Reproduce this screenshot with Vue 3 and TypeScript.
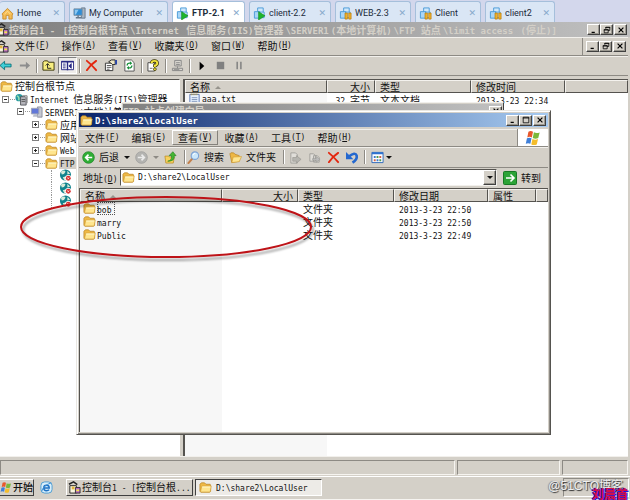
<script setup lang="ts">
import { h, ref, type FunctionalComponent } from 'vue'

interface Tab { label: string; icon: string; active?: boolean; width: number }
interface Menu { label: string; key: string; hot?: boolean }
interface Node { label: string; icon: string; depth: number; sign?: string; selected?: boolean }

// Splits a string into Chinese and Latin runs so each gets its own font size.
const Mixed: FunctionalComponent<{ text: string }> = (props) =>
  props.text
    .split(/([\x20-\x7e]+)/)
    .filter((part) => part !== '')
    .map((part) => (/^[\x20-\x7e]/.test(part) ? h('span', { class: 'latin' }, part) : part))
Mixed.props = ['text']

const tabs: Tab[] = [
  { label: 'Home', icon: 'home', width: 65 },
  { label: 'My Computer', icon: 'pc', width: 99 },
  { label: 'FTP-2.1', icon: 'vm-run', active: true, width: 73 },
  { label: 'client-2.2', icon: 'vm-run', width: 82 },
  { label: 'WEB-2.3', icon: 'vm-pause', width: 76 },
  { label: 'Client', icon: 'vm-pause', width: 66 },
  { label: 'client2', icon: 'vm-pause', width: 70 },
]

const titleParts = ['控制台1 - ', '[控制台根节点', '\\Internet ', '信息服务(IIS)管理器', '\\SERVER1', '(本地计算机)', '\\FTP 站点', '\\limit access ', '(停止)]']

const mainMenus: Menu[] = [
  { label: '文件', key: 'F' },
  { label: '操作', key: 'A' },
  { label: '查看', key: 'V' },
  { label: '收藏夹', key: 'O' },
  { label: '窗口', key: 'W' },
  { label: '帮助', key: 'H' },
]

const folderMenus: Menu[] = [
  { label: '文件', key: 'F' },
  { label: '编辑', key: 'E' },
  { label: '查看', key: 'V', hot: true },
  { label: '收藏', key: 'A' },
  { label: '工具', key: 'T' },
  { label: '帮助', key: 'H' },
]

const tools = ['back', 'next', '|', 'up', 'panes', '|', 'cross', 'props', 'refresh', '|', 'help', '|', 'net', '|', 'play', 'stop', 'pause']

const tree: Node[] = [
  { label: '控制台根节点', icon: 'folder', depth: 0 },
  { label: 'Internet 信息服务(IIS)管理器', icon: 'iis', depth: 1, sign: '-' },
  { label: 'SERVER1(本地计算机)', icon: 'server', depth: 2, sign: '-' },
  { label: '应用程序池', icon: 'folder', depth: 3, sign: '+' },
  { label: '网站', icon: 'folder', depth: 3, sign: '+' },
  { label: 'Web 服务扩展', icon: 'folder', depth: 3, sign: '+' },
  { label: 'FTP 站点', icon: 'folder', depth: 3, sign: '-', selected: true },
  { label: '', icon: 'globe', depth: 4 },
  { label: '', icon: 'globe', depth: 4 },
  { label: '', icon: 'globe', depth: 4 },
]

const folders = [
  { name: 'bob', date: '2013-3-23 22:50' },
  { name: 'marry', date: '2013-3-23 22:50' },
  { name: 'Public', date: '2013-3-23 22:49' },
]

const address = ref('D:\\share2\\LocalUser')
</script>

<template>
  <svg class="defs" aria-hidden="true">
    <symbol id="home" viewBox="0 0 14 14"><path d="M1 7.5 7 1.5l6 6-1 1V13H8.500V9h-3v4H2V8.500z" fill="#f5bd55" stroke="#c98b2c" /><path d="M4 7.500 7 4.500l3 3" fill="none" stroke="#ffe3a0" /></symbol>
    <symbol id="pc" viewBox="0 0 14 14"><path d="M9 1h4v11H9z" fill="#a9b6c2" stroke="#66788a" /><path d="M1 2h9v7H1z" fill="#2f8ed6" stroke="#8394a5" /><path d="M2 3h4L3 8H2z" fill="#8cc8f1" /><path d="M3 11.500h6M5.500 9v2" stroke="#66788a" stroke-width="1.500" /></symbol>
    <symbol id="vm" viewBox="0 0 14 14"><path d="M5 1h6v6H5z" fill="#cfe8fb" stroke="#4a9ad8" /><path d="M1.500 5h6v7h-6z" fill="#a9d5f7" stroke="#4a9ad8" /><path d="M7 5.500h5v6H7z" fill="#d9effd" stroke="#4a9ad8" /></symbol>
    <symbol id="vm-run" viewBox="0 0 14 14"><use href="#vm" /><path d="m6 5 7 4.500L6 14z" fill="#1fb52c" stroke="#128a1c" stroke-width=".6" /></symbol>
    <symbol id="vm-pause" viewBox="0 0 14 14"><use href="#vm" /><path d="M6.500 6.500H9V13H6.500zM10.500 6.500H13V13h-2.500z" fill="#f4b62a" stroke="#b77a0b" stroke-width=".8" /></symbol>
    <symbol id="mmc" viewBox="0 0 14 14"><path d="M2 5h7v8H2z" fill="#f8f4df" stroke="#222" /><path d="M1 3.500 6 1l4 3" fill="none" stroke="#222" stroke-width="1.600" /><path d="M8 7h5v6H8z" fill="#b86ac7" stroke="#333" /><path d="M4 6h3v3H4z" fill="#e3b43a" /><path d="M9 9h3v2H9z" fill="#f5e34b" /></symbol>
    <symbol id="folder" viewBox="0 0 14 14"><path d="M1 3.500 2.500 2H6l1.500 1.500H12l.5 1V11l-1 1H2l-1-1z" fill="#efb946" stroke="#b98424" stroke-width=".8" /><path d="M3 5.500h10.200L12 11.800H1.600z" fill="#ffe58e" stroke="#cf9a31" stroke-width=".6" /><path d="M3.500 6.500H12" stroke="#fff8cf" /></symbol>
    <symbol id="iis" viewBox="0 0 14 14"><circle cx="4.500" cy="5" r="4" fill="#2a9aa0" /><path d="M2 3q3 1 2 5" stroke="#9be0b0" fill="none" stroke-width="1.500" /><path d="M6 4h5l1 1v8H6z" fill="#b5b5bb" stroke="#55565e" /><path d="M8 3h5v8" fill="none" stroke="#777" /><path d="M7 7h4M7 9h4" stroke="#555" /></symbol>
    <symbol id="server" viewBox="0 0 14 14"><path d="M8 1h4l1 1v10H8z" fill="#c5c8d2" stroke="#777b8c" stroke-width=".8" /><path d="M1.500 2.500h8v6h-8z" fill="#6177d8" stroke="#9da2b4" /><path d="M3 11.500 4 9h3.500l1 2.500z" fill="#b9bdcb" /></symbol>
    <symbol id="globe" viewBox="0 0 14 14"><circle cx="7" cy="6.500" r="6" fill="#11838d" /><path d="M2 3q4-3 5 0-1 3-4 3M9 2l3 3-3 1zM4 9l3-1 2 3-3 1.500" fill="#d8ead9" /><circle cx="10" cy="10" r="3.500" fill="#fff" /><circle cx="10" cy="10" r="2.600" fill="#d72f2f" /><path d="m9 9 2 2m0-2-2 2" stroke="#fff" stroke-width=".7" /></symbol>
    <symbol id="back" viewBox="0 0 14 14"><path d="M1 7 6 2.500v3h7v3H6v3z" fill="#3fd0d8" stroke="#076b73" stroke-width=".9" /></symbol>
    <symbol id="next" viewBox="0 0 14 14"><path d="M13 7 8.500 3v3H2v2h6.500v3z" fill="#8d8d8d" /></symbol>
    <symbol id="up" viewBox="0 0 14 14"><path d="M1 3.500 2.500 2H6l1 1.500h6V12H1z" fill="#f8ef80" stroke="#35310b" /><path d="M6 5v5h4M4 7l2-2 2 2" fill="none" stroke="#222" /></symbol>
    <symbol id="panes" viewBox="0 0 14 14"><path d="M.5 2.500h13v9H.5z" fill="#fff" stroke="#2a2a84" /><path d="M.5 3h13M7 3v9" stroke="#2a2a84" stroke-width="1.500" /><path d="M2 5.500h3M2 7.500h3M2 9.500h3M11 5 8.500 7.500 11 10z" stroke="#2a2a84" fill="#2a2a84" /></symbol>
    <symbol id="cross" viewBox="0 0 14 14"><path d="M2 2q5 4 10 10M12 2Q6 6 2 12" fill="none" stroke="#e3260e" stroke-width="2" stroke-linecap="round" /></symbol>
    <symbol id="props" viewBox="0 0 14 14"><path d="M1.500 4.500h8v8h-8z" fill="#fff" stroke="#333" /><path d="M3 7h5M3 9h5M3 11h3" stroke="#555" /><path d="m5 3 3-2h4v5H9L7 4z" fill="#eee7c5" stroke="#222" /><path d="M12 1h2v5h-2z" fill="#2845a8" /></symbol>
    <symbol id="refresh" viewBox="0 0 14 14"><path d="M2 1h7l3 3v9H2z" fill="#fff" stroke="#555" /><path d="M4.500 7q0-3 3.500-2.500M9.500 7q0 3-3.500 2.500" stroke="#18903a" stroke-width="1.500" fill="none" /><path d="m7.500 2.500 2.500 2-2.500 2zM6.500 7.500 4 9.500l2.500 2z" fill="#18903a" /></symbol>
    <symbol id="help" viewBox="0 0 14 14"><path d="M1 4h7v9H1z" fill="#fff" stroke="#444" /><path d="M3 10h3" stroke="#666" /><path d="M5 4.500Q5 2 8 2t3 2.500Q11 6.500 8.500 7v1.500" fill="none" stroke="#3b3503" stroke-width="3.600" /><path d="M5 4.500Q5 2 8 2t3 2.500Q11 6.500 8.500 7v1.500" fill="none" stroke="#f4e63e" stroke-width="2" /><circle cx="8.500" cy="11" r="1.500" fill="#f4e63e" stroke="#3b3503" stroke-width=".8" /></symbol>
    <symbol id="net" viewBox="0 0 14 14"><path d="M4 1.500h7v6H4zM1.500 10h11v2.500h-11z" fill="#dad7d1" stroke="#858585" /><path d="M5.500 4h4M5.500 6h4M7 8v2M3 11.500h6" stroke="#858585" /></symbol>
    <symbol id="play" viewBox="0 0 14 14"><path d="m5 3 5 4.500L5 12z" /></symbol>
    <symbol id="stop" viewBox="0 0 14 14"><path d="M3 3h8v8H3z" fill="#808080" /></symbol>
    <symbol id="pause" viewBox="0 0 14 14"><path d="M4.500 3v8M8.500 3v8" stroke="#808080" stroke-width="1.600" /></symbol>
    <symbol id="txt" viewBox="0 0 14 14"><path d="M2 1.500h10v12H2z" fill="#e6f1ff" stroke="#5876b5" /><path d="M4 5h6M4 7h6M4 9h6" stroke="#8296ba" /><path d="M3 1.500h8" stroke="#b89c45" stroke-width="2" stroke-dasharray="1 1" /></symbol>
    <symbol id="go-back" viewBox="0 0 14 14"><circle cx="7" cy="7" r="6.300" fill="#2fae35" stroke="#1b7f24" stroke-width=".7" /><path d="M11 7H4m3-3L4 7l3 3" fill="none" stroke="#fff" stroke-width="1.800" /></symbol>
    <symbol id="go-next" viewBox="0 0 14 14"><circle cx="7" cy="7" r="6.300" fill="#b4b4b1" stroke="#979797" stroke-width=".7" /><path d="M3 7h7M7 4l3 3-3 3" fill="none" stroke="#ebebeb" stroke-width="1.800" /></symbol>
    <symbol id="folder-up" viewBox="0 0 14 14"><path d="M1 5.500h4l1 1h5L10 13H2z" fill="#f6d15b" stroke="#ba8b28" stroke-width=".8" /><path d="M4 11q5-1 4-6H5.500L9.500.8 13 5h-2q1 6-7 6z" fill="#45b733" stroke="#23801d" stroke-width=".7" /></symbol>
    <symbol id="search" viewBox="0 0 14 14"><path d="m6 8-4.500 5" stroke="#c37f4a" stroke-width="2.200" stroke-linecap="round" /><circle cx="8.500" cy="5" r="4" fill="#cbe7fb" stroke="#7ca2d4" stroke-width="1.200" /><path d="M6.500 4.500q.5-2 2.500-2" fill="none" stroke="#fff" /></symbol>
    <symbol id="folder-open" viewBox="0 0 14 14"><path d="m1 3 1-1h3l1.500 1.500L11 5v6L3 12.500z" fill="#eeb743" stroke="#b98424" stroke-width=".8" /><path d="m4.500 6.500 9-.5-2.500 5.500-8 1z" fill="#ffe58e" stroke="#cf9a31" stroke-width=".7" /></symbol>
    <symbol id="move" viewBox="0 0 14 14"><path d="M2 2h5l2 2v9H2z" fill="#e0ded9" stroke="#a09f9a" /><path d="M4 7h4V5l5 4-5 4v-2H4z" fill="#b5b4af" stroke="#979690" stroke-width=".7" /></symbol>
    <symbol id="copy" viewBox="0 0 14 14"><path d="M2 3h4l2 2v6H2zM6 5h4l2 2v5H6z" fill="#e0ded9" stroke="#a09f9a" /><path d="M5 8h4V6l4 3-4 3v-2H5z" fill="#bbb" stroke="#979690" stroke-width=".6" /></symbol>
    <symbol id="undo" viewBox="0 0 14 14"><path d="M3 6q7-5.500 8.500-1 .8 4-4.500 7.500" fill="none" stroke="#2468cf" stroke-width="2.800" /><path d="M0 1v8h8z" fill="#2468cf" /></symbol>
    <symbol id="views" viewBox="0 0 14 14"><path d="M1 1.500h12v11H1z" fill="#fff" stroke="#2965b9" /><path d="M1 2.500h12" stroke="#2e72d1" stroke-width="2" /><path d="M3 5.500h2v2H3zM6 9h2v2H6z" fill="#3f77c9" /><path d="M6 5.500h2v2H6zM9 9h2v2H9z" fill="#4b9a51" /><path d="M9 5.500h2v2H9zM3 9h2v2H3z" fill="#cf6147" /></symbol>
    <symbol id="go" viewBox="0 0 14 14"><rect x=".5" y=".5" width="13" height="13" rx="1" fill="#2ca337" stroke="#177824" /><path d="M3 7h8M7.500 3.500 11 7l-3.500 3.500" fill="none" stroke="#fff" stroke-width="1.600" /></symbol>
    <symbol id="flag" viewBox="0 0 14 14"><path d="M3 1.500q2-1.200 4 0L6 6.500q-2-1.200-4 0z" fill="#e8582b" /><path d="M7.800 2q2 1.300 5 .2L11.600 7q-2.500 1.200-4.800 0z" fill="#7bb83a" /><path d="M1.700 7.300q2-1.200 4 0l-1 4.800q-2-1.200-4 0z" fill="#3f7fd8" /><path d="M6.500 7.800q2.500 1.200 4.900.1l-1.100 4.700q-2.400 1.200-4.800 0z" fill="#f4bd2c" /></symbol>
    <symbol id="ie" viewBox="0 0 14 14"><rect x="1" y="1" width="12" height="12" rx="4" fill="#d9effb" stroke="#4a9ad2" /><path d="M4 7.500h6Q10 4.500 7 4.500T4 7.500t3 3q2 0 2.800-1.200" fill="none" stroke="#1f72c4" stroke-width="1.500" /><path d="M2 11Q3 5 12 2" fill="none" stroke="#3d90d6" /></symbol>
    <symbol id="cap-min" viewBox="0 0 10 10"><path d="M2 8h4" stroke="#000" stroke-width="1.600" /></symbol>
    <symbol id="cap-max" viewBox="0 0 10 10"><path d="M1.500 1.500h7v7h-7zM1 2.500h8" fill="none" stroke="#000" /></symbol>
    <symbol id="cap-restore" viewBox="0 0 10 10"><path d="M3.500 3.500v-2h5v4h-2M1.500 4.500h5v4h-5zM3 2h6M1 5h6" fill="none" stroke="#000" /></symbol>
    <symbol id="cap-close" viewBox="0 0 10 10"><path d="m2 2 6 6m0-6L2 8" stroke="#000" stroke-width="1.500" /></symbol>
  </svg>

  <div class="screen">
    <nav class="tabs">
      <div v-for="tab in tabs" :key="tab.label" class="tab" :class="{ active: tab.active }" :style="{ width: tab.width + 'px' }">
        <svg class="icon"><use :href="'#' + tab.icon" /></svg>
        <a href="#">{{ tab.label }}</a>
        <button class="tab-close" aria-label="Close">✕</button>
      </div>
    </nav>

    <main class="console">
      <header class="title inactive">
        <svg class="icon clip"><use href="#mmc" /></svg>
        <h1 class="path"><span v-for="part in titleParts" :key="part"><Mixed :text="part" /></span></h1>
        <div class="caps">
          <button class="cap" aria-label="Minimize"><svg><use href="#cap-min" /></svg></button>
          <button class="cap" aria-label="Restore"><svg><use href="#cap-restore" /></svg></button>
          <button class="cap last" aria-label="Close"><svg><use href="#cap-close" /></svg></button>
        </div>
      </header>

      <div class="menubar">
        <svg class="icon clip"><use href="#mmc" /></svg>
        <div class="menus">
          <button v-for="m in mainMenus" :key="m.key" class="menu">{{ m.label }}<span class="latin">(<u>{{ m.key }}</u>)</span></button>
        </div>
        <div class="caps child">
          <button class="cap" aria-label="Minimize"><svg><use href="#cap-min" /></svg></button>
          <button class="cap" aria-label="Restore"><svg><use href="#cap-restore" /></svg></button>
          <button class="cap last" aria-label="Close"><svg><use href="#cap-close" /></svg></button>
        </div>
      </div>

      <div class="toolbar">
        <template v-for="(t, i) in tools" :key="i">
          <span v-if="t === '|'" class="divider"></span>
          <button v-else class="tool" :class="{ pressed: t === 'panes' }" :aria-label="t"><svg class="icon"><use :href="'#' + t" /></svg></button>
        </template>
      </div>

      <div class="panes">
        <section class="tree-pane">
          <ul class="tree">
            <li v-for="(n, i) in tree" :key="i" :class="'depth-' + n.depth">
              <span v-if="n.depth > 0" class="branch"><i v-if="n.sign" class="sign" :class="{ plus: n.sign === '+' }"></i></span>
              <svg class="icon"><use :href="'#' + n.icon" /></svg>
              <span class="node" :class="{ selected: n.selected }"><Mixed :text="n.label" /></span>
            </li>
          </ul>
        </section>
        <section class="list-pane">
          <table class="list main-list">
            <colgroup><col class="c-name"><col class="c-size-s"><col class="c-type"><col class="c-date"><col></colgroup>
            <thead><tr><th>名称 <i class="sort"></i></th><th class="num">大小</th><th>类型</th><th>修改时间</th><th></th></tr></thead>
            <tbody>
              <tr><td><div class="cell"><svg class="icon"><use href="#txt" /></svg><Mixed text="aaa.txt" /></div></td><td class="num"><Mixed text="32 字节" /></td><td>文本文档</td><td><Mixed text="2013-3-23 22:34" /></td><td></td></tr>
              <tr><td></td><td></td><td></td><td><Mixed text="2013-3-23 22:34" /></td><td></td></tr>
            </tbody>
          </table>
        </section>
      </div>
      <div class="status"><span></span><span></span><span></span></div>
    </main>

    <footer class="taskbar">
      <button class="start"><svg class="icon"><use href="#flag" /></svg>开始</button>
      <button class="quick" aria-label="Internet Explorer"><svg class="icon"><use href="#ie" /></svg></button>
      <button class="task"><svg class="icon"><use href="#mmc" /></svg><span><Mixed text="控制台1 - [控制台根..." /></span></button>
      <button class="task current"><svg class="icon"><use href="#folder" /></svg><span><Mixed text="D:\share2\LocalUser" /></span></button>
      <div class="tray"></div>
    </footer>

    <div class="wizard">
      <div class="title inactive"><h2><Mixed text="FTP 站点创建向导" /></h2><button class="cap" aria-label="Close"><svg><use href="#cap-close" /></svg></button></div>
    </div>

    <section class="explorer">
      <header class="title">
        <svg class="icon"><use href="#folder" /></svg>
        <h2><Mixed text="D:\share2\LocalUser" /></h2>
        <div class="caps">
          <button class="cap" aria-label="Minimize"><svg><use href="#cap-min" /></svg></button>
          <button class="cap" aria-label="Maximize"><svg><use href="#cap-max" /></svg></button>
          <button class="cap last" aria-label="Close"><svg><use href="#cap-close" /></svg></button>
        </div>
      </header>
      <div class="menubar">
        <div class="menus">
          <button v-for="m in folderMenus" :key="m.key" class="menu" :class="{ hot: m.hot }">{{ m.label }}<span class="latin">(<u>{{ m.key }}</u>)</span></button>
        </div>
        <div class="brand"><svg><use href="#flag" /></svg></div>
      </div>
      <div class="toolbar">
        <button class="word"><svg class="icon"><use href="#go-back" /></svg>后退<i class="drop"></i></button>
        <button class="word" aria-label="Forward"><svg class="icon"><use href="#go-next" /></svg><i class="drop faint"></i></button>
        <button class="word" aria-label="Up"><svg class="icon"><use href="#folder-up" /></svg></button>
        <span class="divider"></span>
        <button class="word"><svg class="icon"><use href="#search" /></svg>搜索</button>
        <button class="word"><svg class="icon"><use href="#folder-open" /></svg>文件夹</button>
        <span class="divider"></span>
        <button class="tool" aria-label="Move"><svg class="icon"><use href="#move" /></svg></button>
        <button class="tool" aria-label="Copy"><svg class="icon"><use href="#copy" /></svg></button>
        <button class="tool" aria-label="Delete"><svg class="icon"><use href="#cross" /></svg></button>
        <button class="tool" aria-label="Undo"><svg class="icon"><use href="#undo" /></svg></button>
        <span class="divider"></span>
        <button class="word view" aria-label="Views"><svg class="icon"><use href="#views" /></svg><i class="drop"></i></button>
      </div>
      <div class="address">
        <label for="address">地址<span class="latin">(<u>D</u>)</span></label>
        <div class="box">
          <svg class="icon"><use href="#folder" /></svg>
          <input id="address" v-model="address" class="latin" type="text">
          <button class="cap" aria-label="History"><i class="drop"></i></button>
        </div>
        <button class="go"><svg class="icon"><use href="#go" /></svg>转到</button>
      </div>
      <div class="files">
        <table class="list">
          <colgroup><col class="c-name"><col class="c-size"><col class="c-type"><col class="c-date"><col class="c-attr"><col></colgroup>
          <thead><tr><th>名称 <i class="sort"></i></th><th class="num">大小</th><th>类型</th><th>修改日期</th><th>属性</th><th></th></tr></thead>
          <tbody>
            <tr v-for="(f, i) in folders" :key="f.name">
              <td><div class="cell"><svg class="icon"><use href="#folder" /></svg><span :class="{ focus: i === 0 }"><Mixed :text="f.name" /></span></div></td>
              <td></td><td>文件夹</td><td><Mixed :text="f.date" /></td><td></td><td></td>
            </tr>
          </tbody>
        </table>
      </div>
    </section>

    <svg class="ring" viewBox="0 0 300 72" aria-hidden="true"><ellipse cx="150" cy="34" rx="145" ry="30" /></svg>
    <div class="mark"><span>@51CTO博客</span><b>刘晨首</b></div>
  </div>
</template>

<style>
body { margin: 0; overflow: hidden; }
.latin { font-family: "DejaVu Sans Mono", "Liberation Mono", monospace; font-size: 8px; line-height: 8px; white-space: pre; }
h1 .latin, h2 .latin { font-size: 9px; }
</style>

<style scoped>
* { box-sizing: border-box; }
.defs { display: none; }
.screen { position: relative; display: flex; flex-direction: column; height: 100vh; overflow: hidden; background: #d4d0c8; color: #111; font: 10px/12px "Noto Sans CJK SC", sans-serif; }
button { display: flex; align-items: center; padding: 0; border: 0; background: none; color: inherit; font: inherit; white-space: nowrap; }
svg { display: block; flex: none; }
.icon { width: 13px; height: 13px; }
.clip { margin-left: -4px; }

.tabs { display: flex; gap: 4px; height: 22px; background: #d3d7ec; font: 9px/12px Roboto, sans-serif; }
.tab { display: flex; align-items: center; gap: 3px; padding: 2px 4px 0 3px; margin-top: 1px; border: 1px solid #a5bfdb; border-bottom: 0; border-radius: 3px 3px 0 0; background: #dae6f5; }
.tab:first-child { padding-left: 1px; border-left: 0; }
.tab.active { background: #fff; font-weight: 700; }
.tab a { flex: 1; color: #1c2b3b; text-decoration: none; white-space: nowrap; }
.tab-close { color: #86a9cb; font: 700 9px/12px "DejaVu Sans", sans-serif; }

.console { display: flex; flex: 1; flex-direction: column; min-height: 0; padding-right: 2px; }
.title { display: flex; align-items: center; height: 14px; background: linear-gradient(90deg, #0a246a, #a6caf0); color: #fff; }
.inactive { background: linear-gradient(90deg, #808080, #c0c0c0); color: #d4d0c8; }
.console > .title { height: 15px; margin-right: -2px; padding-right: 3px; }
h1, h2 { flex: 1; margin: 0; font-size: 10px; line-height: 12px; font-weight: 700; white-space: nowrap; }
.path { display: flex; gap: 2px; min-width: 0; }
.caps { display: flex; }
.cap { display: grid; place-items: center; width: 13px; height: 11px; border: 1px solid; border-color: #fff #404040 #404040 #fff; box-shadow: inset -1px -1px #9a978f; background: #d4d0c8; color: #000; }
.cap.last { margin-left: 1px; }
.cap svg { width: 8px; height: 8px; }

.menubar { display: flex; align-items: center; height: 19px; border-bottom: 1px solid #8d8a84; box-shadow: inset 0 1px #f2f0ec; }
.menus { display: flex; flex: 1; }
.menu { height: 15px; padding: 0 6px; border: 0; }
.child { align-items: center; height: 17px; padding: 0 2px 0 3px; border-left: 1px solid #8d8a84; }
.hot { border: 1px solid; border-color: #fff #85827c #85827c #fff; padding: 0 5px; }
.toolbar { display: flex; align-items: center; height: 20px; border-bottom: 1px solid #8d8a84; box-shadow: inset 0 1px #f2f0ec; }
.console > .toolbar > .tool:first-child { margin-left: -4px; }
.tool { justify-content: center; width: 19px; height: 17px; }
.pressed { background: #efedea; border: 1px solid; border-color: #808080 #fff #fff #808080; }
.divider { width: 1px; height: 14px; margin: 0 2px; background: #8d8a84; box-shadow: 1px 0 #fff; }

.panes { display: flex; flex: 1; gap: 3px; min-height: 0; margin-top: 3px; }
.tree-pane { width: 180px; border-top: 1px solid #55534f; border-right: 1px solid #fff; background: #fff; overflow: hidden; }
.list-pane { flex: 1; border: solid #55534f; border-width: 1px 0 0 2px; background: linear-gradient(90deg, #f7f7f7 142px, #fff 142px); overflow: hidden; }
.tree { display: flex; flex-direction: column; height: 128px; margin: 0; padding: 0; list-style: none; }
.tree li { display: flex; flex: 1; align-items: center; min-height: 0; white-space: nowrap; }
.tree .icon { margin-right: 1px; }
.branch { display: flex; align-items: center; width: 13px; height: 1px; background: repeating-linear-gradient(90deg, #999 0 1px, #fff 1px 2px); }
.sign { position: relative; width: 7px; height: 7px; border: 1px solid #808080; background: linear-gradient(#222, #222) center / 3px 1px no-repeat, #fff; }
.sign.plus { background: linear-gradient(#222, #222) center / 3px 1px no-repeat, linear-gradient(#222, #222) center / 1px 3px no-repeat, #fff; }
.depth-1 { padding-left: 2px; }
.depth-2 { padding-left: 17px; }
.depth-3 { padding-left: 32px; }
.depth-4 { padding-left: 51px; }
.depth-4 .branch { width: 8px; height: 100%; border-left: 1px dotted #999; background: none; }
.node { padding: 0 1px; }
.selected { background: #d4d0c8; }

.list { width: 100%; table-layout: fixed; border-collapse: separate; border-spacing: 0; }
.c-name { width: 142px; }
.c-size-s { width: 48px; }
.c-size { width: 76px; }
.c-type { width: 96px; }
.c-date { width: 94px; }
.c-attr { width: 48px; }
.list th { height: 13px; padding: 0 4px; border: 1px solid; border-color: #f4f2ee #55534f #55534f #f4f2ee; background: #d4d0c8; font-weight: 400; line-height: 11px; text-align: left; white-space: nowrap; }
.list td { height: 13px; padding: 0 5px; line-height: 13px; white-space: nowrap; }
.list td:first-child { padding: 0 3px; }
.list .num { text-align: right; }
.cell { display: flex; align-items: center; height: 13px; gap: 1px; }
.sort { display: inline-block; margin: 0 3px 2px; border: solid transparent; border-width: 0 3px 3px; border-bottom-color: #96938c; }
.focus { height: 13px; padding-right: 4px; outline: 1px dotted #555; outline-offset: -1px; }

.status { display: grid; grid-template-columns: 456fr 104fr 66fr; gap: 2px; height: 20px; padding: 3px 0 1px; border-top: 1px solid #f2f0ec; }
.status span { border: 1px solid; border-color: #8d8a84 #f6f4f0 #f6f4f0 #8d8a84; }
.taskbar { display: flex; align-items: center; height: 24px; padding-bottom: 2px; border-top: 1px solid #fff; border-bottom: 1px solid #f6f4f0; }
.start { gap: 1px; width: 34px; height: 17px; border: 1px solid; border-color: #fff #404040 #404040 #fff; border-left: 0; font-weight: 500; }
.start .icon { width: 12px; }
.quick { margin: 0 13px 0 6px; }
.task { gap: 1px; width: 127px; height: 17px; margin-right: 2px; padding-left: 1px; border: 1px solid; border-color: #fff #404040 #404040 #fff; }
.current { gap: 4px; border-color: #404040 #fff #fff #404040; padding-left: 3px; background: #edebe7; }
.tray { width: 66px; height: 19px; margin-left: auto; margin-right: 1px; border: 1px solid; border-color: #8d8a84 #fff #fff #8d8a84; }

.wizard { position: absolute; top: 102px; left: 121px; right: 126px; height: 60px; border: 1px solid; border-color: #f2f0ec #404040 #404040 #f2f0ec; background: #d4d0c8; padding: 1px; }
.explorer { position: absolute; top: 110px; left: 76px; right: 79px; bottom: 65px; display: flex; flex-direction: column; padding: 2px; border: 1px solid; border-color: #e9e7e2 #55534f #55534f #e9e7e2; box-shadow: inset 1px 1px #fff, inset -1px -1px #8d8a84; background: #d4d0c8; }
.explorer .title { padding: 0 2px 0 1px; gap: 2px; }
.explorer .menubar { margin-top: 2px; height: 18px; }
.brand { display: grid; place-items: center; width: 31px; height: 17px; border-left: 1px solid #8d8a84; background: #fff; }
.brand svg { width: 16px; height: 16px; }
.explorer .toolbar { height: 21px; padding-left: 3px; }
.word { gap: 4px; margin-right: 5px; }
.view { margin-left: 4px; }
.drop { display: block; margin-left: 1px; border: solid transparent; border-width: 3px 3px 0; border-top-color: #111; }
.faint { border-top-color: #8d8a84; }
.view .drop { margin-left: -2px; }
.address { display: flex; align-items: center; height: 19px; padding: 1px 0 1px 4px; }
.address label { width: 37px; white-space: nowrap; }
.box { display: flex; flex: 1; align-items: center; height: 17px; padding-left: 1px; border: 1px solid; border-color: #55534f #f2f0ec #f2f0ec #55534f; background: #fff; }
.box input { flex: 1; min-width: 0; height: 12px; padding: 0 3px; border: 0; outline: 0; background: none; color: inherit; }
.box .cap { width: 13px; height: 15px; }
.box .drop { margin: 0; }
.go { gap: 4px; width: 51px; padding-left: 6px; }
.go .icon { width: 14px; height: 14px; }
.files { flex: 1; margin-top: 1px; min-height: 0; border: solid #55534f; border-width: 1px 0 0 1px; background: linear-gradient(90deg, #f7f7f7 142px, #fff 142px); }

.ring { position: absolute; top: 193px; left: 16px; width: 300px; height: 72px; pointer-events: none; }
.ring ellipse { fill: none; stroke: #be1318; stroke-width: 2; filter: drop-shadow(2px 3px 1px rgba(0, 0, 0, .35)); }
.mark { position: absolute; right: 2px; bottom: 0; display: grid; justify-items: end; pointer-events: none; }
.mark span { grid-area: 1 / 1; padding: 0 5px 7px 0; color: #efefef; font: 12px/14px "Liberation Sans", "Noto Sans CJK SC", sans-serif; text-shadow: 1px 1px 1px #333, -1px 0 1px #777; }
.mark b { grid-area: 1 / 1; align-self: end; color: #d0104a; font: 900 12px/13px "Noto Sans CJK SC", sans-serif; text-shadow: 1px 1px #1a1ae0, -1px 0 #1a1ae0; }
</style>
